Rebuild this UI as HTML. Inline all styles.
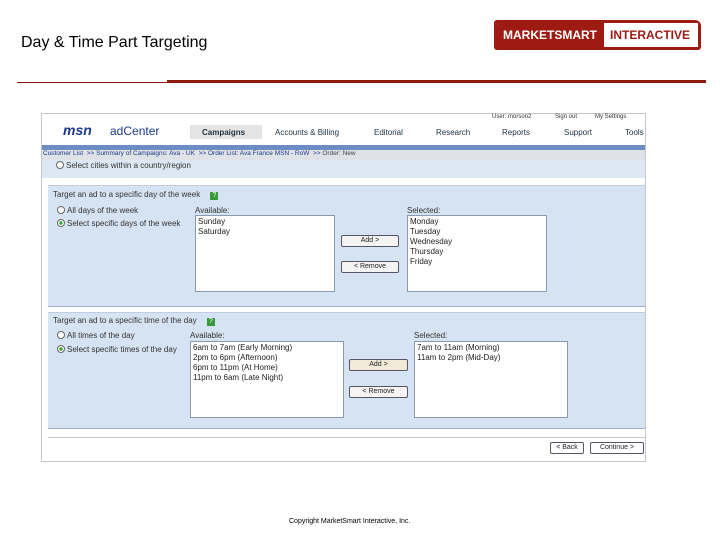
<!DOCTYPE html>
<html><head><style>
body{margin:0;width:720px;height:540px;background:#fff;position:relative;overflow:hidden;font-family:"Liberation Sans",sans-serif}
.a{position:absolute}
.t{position:absolute;font-size:8px;color:#333;white-space:nowrap}
.box{position:absolute;background:#fff;border:1px solid #8a9ab0;font-size:8px;line-height:10px;padding:1px 2px;color:#222;box-sizing:border-box}
.btn{position:absolute;background:#f4f4f4;border:1px solid #556;border-radius:2px;font-size:7px;text-align:center;line-height:10px;box-sizing:border-box;color:#222}
.r{display:inline-block;width:6px;height:6px;border:1px solid #666;border-radius:50%;vertical-align:-1px;margin-right:2px;background:#fff}
.nav{position:absolute;top:128px;font-size:8px;color:#234}
.q{display:inline-block;width:8px;height:8px;background:#3a9a3a;color:#fff;font-size:7px;line-height:8px;text-align:center;margin-left:8px}
</style></head><body>
<div class="t" style="left:21px;top:34px;font-size:16px;color:#000">Day &amp; Time Part Targeting</div>
<div class="a" style="left:494px;top:20px;width:207px;height:30px;background:#9e1b14;border-radius:3px 6px 3px 3px"></div>
<div class="t" style="left:503px;top:28px;font-size:12px;font-weight:bold;color:#fff">MARKETSMART</div>
<div class="a" style="left:604px;top:23px;width:94px;height:24px;background:#fff"></div>
<div class="t" style="left:610px;top:28px;font-size:12px;font-weight:bold;color:#9e1b14">INTERACTIVE</div>
<div class="a" style="left:17px;top:82px;width:150px;height:1px;background:#8a1a10"></div>
<div class="a" style="left:167px;top:80px;width:539px;height:3px;background:#8a1a10"></div>

<div class="a" style="left:41px;top:113px;width:605px;height:349px;border:1px solid #c4c8cc;box-sizing:border-box;background:#fff"></div>
<div class="t" style="left:63px;top:122px;font-size:14px;font-weight:bold;font-style:italic;color:#1a3a8a">msn</div>
<div class="t" style="left:110px;top:124px;font-size:12px;color:#1a3a8a">adCenter</div>
<div class="t" style="left:492px;top:114px;font-size:6px">User: morson2</div>
<div class="t" style="left:555px;top:114px;font-size:6px">Sign out</div>
<div class="t" style="left:595px;top:114px;font-size:6px">My Settings</div>
<div class="a" style="left:190px;top:125px;width:72px;height:14px;background:#e4e4e4"></div>
<div class="nav" style="left:202px;font-weight:bold">Campaigns</div>
<div class="nav" style="left:275px">Accounts &amp; Billing</div>
<div class="nav" style="left:374px">Editorial</div>
<div class="nav" style="left:436px">Research</div>
<div class="nav" style="left:502px">Reports</div>
<div class="nav" style="left:564px">Support</div>
<div class="nav" style="left:625px">Tools</div>
<div class="a" style="left:42px;top:145px;width:603px;height:5px;background:#6d8cc4"></div>
<div class="a" style="left:42px;top:150px;width:603px;height:10px;background:#dfe2e6"></div>
<div class="t" style="left:43px;top:150px;font-size:6.5px;color:#1a3a8a">Customer List &nbsp;&gt;&gt; Summary of Campaigns: Ava - UK &nbsp;&gt;&gt; Order List: Ava France MSN - RoW &nbsp;&gt;&gt; <span style="color:#444">Order: New</span></div>
<div class="a" style="left:42px;top:160px;width:603px;height:18px;background:#dde8f4"></div>
<div class="t" style="left:56px;top:161px"><span class="r"></span>Select cities within a country/region</div>

<div class="a" style="left:48px;top:185px;width:597px;height:120px;background:#d6e3f3;border-top:1px solid #c0cde0;border-bottom:1px solid #9fb0c8"></div>
<div class="t" style="left:53px;top:190px">Target an ad to a specific day of the week <span class="q">?</span></div>
<div class="t" style="left:57px;top:206px"><span class="r"></span>All days of the week</div>
<div class="t" style="left:57px;top:219px"><span class="r" style="background:radial-gradient(#3a3 40%,#fff 45%)"></span>Select specific days of the week</div>
<div class="t" style="left:195px;top:206px">Available:</div>
<div class="box" style="left:195px;top:215px;width:140px;height:77px">Sunday<br>Saturday</div>
<div class="btn" style="left:341px;top:235px;width:58px;height:12px">Add &gt;</div>
<div class="btn" style="left:341px;top:261px;width:58px;height:12px">&lt; Remove</div>
<div class="t" style="left:407px;top:206px">Selected:</div>
<div class="box" style="left:407px;top:215px;width:140px;height:77px">Monday<br>Tuesday<br>Wednesday<br>Thursday<br>Friday</div>

<div class="a" style="left:48px;top:312px;width:597px;height:115px;background:#d6e3f3;border-top:1px solid #c0cde0;border-bottom:1px solid #9fb0c8"></div>
<div class="t" style="left:53px;top:316px">Target an ad to a specific time of the day <span class="q">?</span></div>
<div class="t" style="left:57px;top:331px"><span class="r"></span>All times of the day</div>
<div class="t" style="left:57px;top:345px"><span class="r" style="background:radial-gradient(#3a3 40%,#fff 45%)"></span>Select specific times of the day</div>
<div class="t" style="left:190px;top:331px">Available:</div>
<div class="box" style="left:190px;top:341px;width:154px;height:77px">6am to 7am (Early Morning)<br>2pm to 6pm (Afternoon)<br>6pm to 11pm (At Home)<br>11pm to 6am (Late Night)</div>
<div class="btn" style="left:349px;top:359px;width:59px;height:12px;background:#f1ead8">Add &gt;</div>
<div class="btn" style="left:349px;top:386px;width:59px;height:12px">&lt; Remove</div>
<div class="t" style="left:414px;top:331px">Selected:</div>
<div class="box" style="left:414px;top:341px;width:154px;height:77px">7am to 11am (Morning)<br>11am to 2pm (Mid-Day)</div>
<div class="a" style="left:48px;top:437px;width:597px;height:1px;background:#c8ccd2"></div>
<div class="btn" style="left:550px;top:442px;width:34px;height:12px;background:#fff">&lt; Back</div>
<div class="btn" style="left:590px;top:442px;width:54px;height:12px;background:#fff">Continue &gt;</div>

<div class="t" style="left:289px;top:518px;font-size:7px;color:#000">Copyright MarketSmart Interactive, Inc.</div>
</body></html>
